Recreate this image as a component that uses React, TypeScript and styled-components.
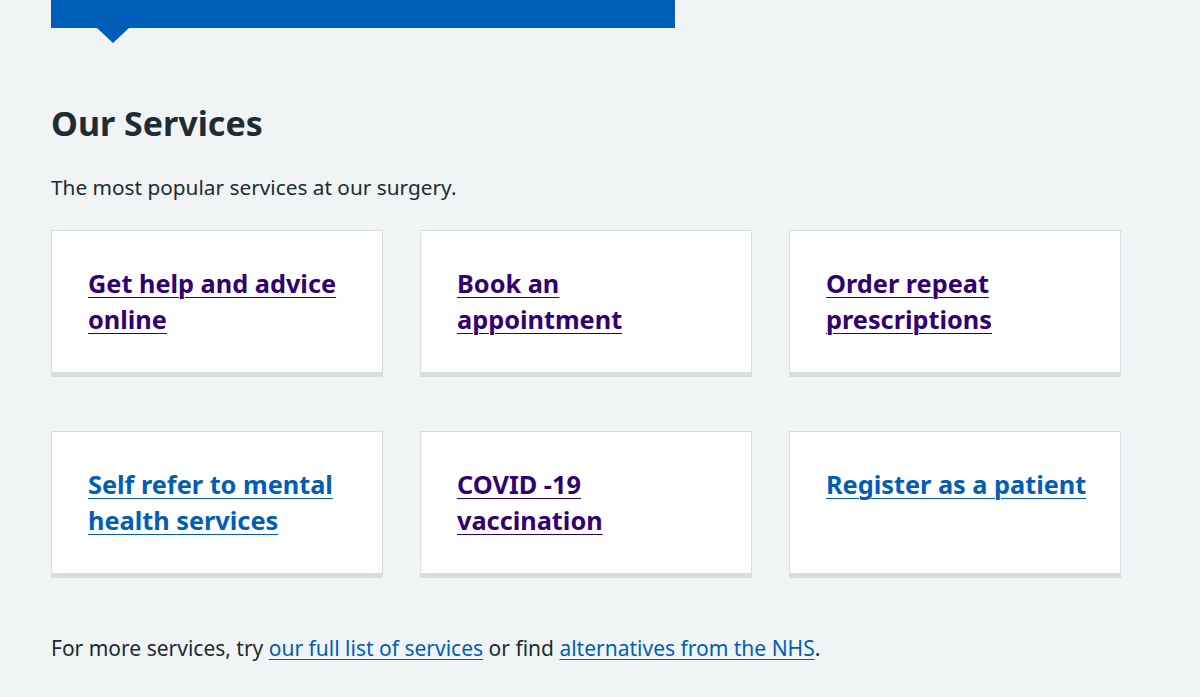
import React from "react";
import styled, { createGlobalStyle } from "styled-components";

const Global = createGlobalStyle`
  html, body { margin: 0; padding: 0; background: #f0f4f5; }
  body { font-family: "Noto Sans", "Open Sans", Arial, sans-serif; color: #212b32; }
`;

const Page = styled.main`
  padding: 0 51px;
  width: 1070px;
`;

const Banner = styled.div`
  position: relative;
  width: 624px;
  height: 28px;
  background: #005eb8;
  &::after {
    content: "";
    position: absolute;
    left: 46px;
    top: 28px;
    border-left: 16px solid transparent;
    border-right: 16px solid transparent;
    border-top: 15px solid #005eb8;
  }
`;

const Heading = styled.h2`
  margin: 75px 0 0;
  font-size: 34px;
  line-height: 40px;
  font-weight: 700;
  color: #212b32;
`;

const Lead = styled.p`
  margin: 30px 0 0;
  font-size: 20.8px;
  line-height: 28px;
`;

const Grid = styled.ul`
  list-style: none;
  margin: 29px 0 0;
  padding: 0;
  display: grid;
  grid-template-columns: repeat(3, 332px);
  column-gap: 37px;
  row-gap: 58px;
`;

const Card = styled.li`
  background: #fff;
  border: 1px solid #d8dde0;
  box-shadow: 0 4px 0 0 #d8dde0;
  height: 143px;
  box-sizing: border-box;
  padding: 34px 30px 34px 36px;
`;

const CardLink = styled.a<{ $visited?: boolean }>`
  font-size: 25.3px;
  line-height: 36px;
  font-weight: 700;
  color: ${(p) => (p.$visited ? "#330072" : "#005eb8")};
  text-decoration: underline;
  text-decoration-thickness: 1px;
  text-underline-offset: 4px;
`;

const Footer = styled.p`
  margin: 60px 0 0;
  font-size: 21px;
  line-height: 28px;
`;

const InlineLink = styled.a`
  color: #005eb8;
  text-decoration: underline;
  text-decoration-thickness: 1px;
  text-underline-offset: 3px;
`;

const services = [
  { label: "Get help and advice online", visited: true },
  { label: "Book an appointment", visited: true },
  { label: "Order repeat prescriptions", visited: true },
  { label: "Self refer to mental health services", visited: false },
  { label: "COVID -19 vaccination", visited: true },
  { label: "Register as a patient", visited: false },
];

export default function App() {
  return (
    <>
      <Global />
      <Page>
        <Banner />
        <Heading>Our Services</Heading>
        <Lead>The most popular services at our surgery.</Lead>
        <Grid>
          {services.map((s) => (
            <Card key={s.label}>
              <CardLink href="#" $visited={s.visited}>
                {s.label}
              </CardLink>
            </Card>
          ))}
        </Grid>
        <Footer>
          For more services, try <InlineLink href="#">our full list of services</InlineLink> or find{" "}
          <InlineLink href="#">alternatives from the NHS</InlineLink>.
        </Footer>
      </Page>
    </>
  );
}
